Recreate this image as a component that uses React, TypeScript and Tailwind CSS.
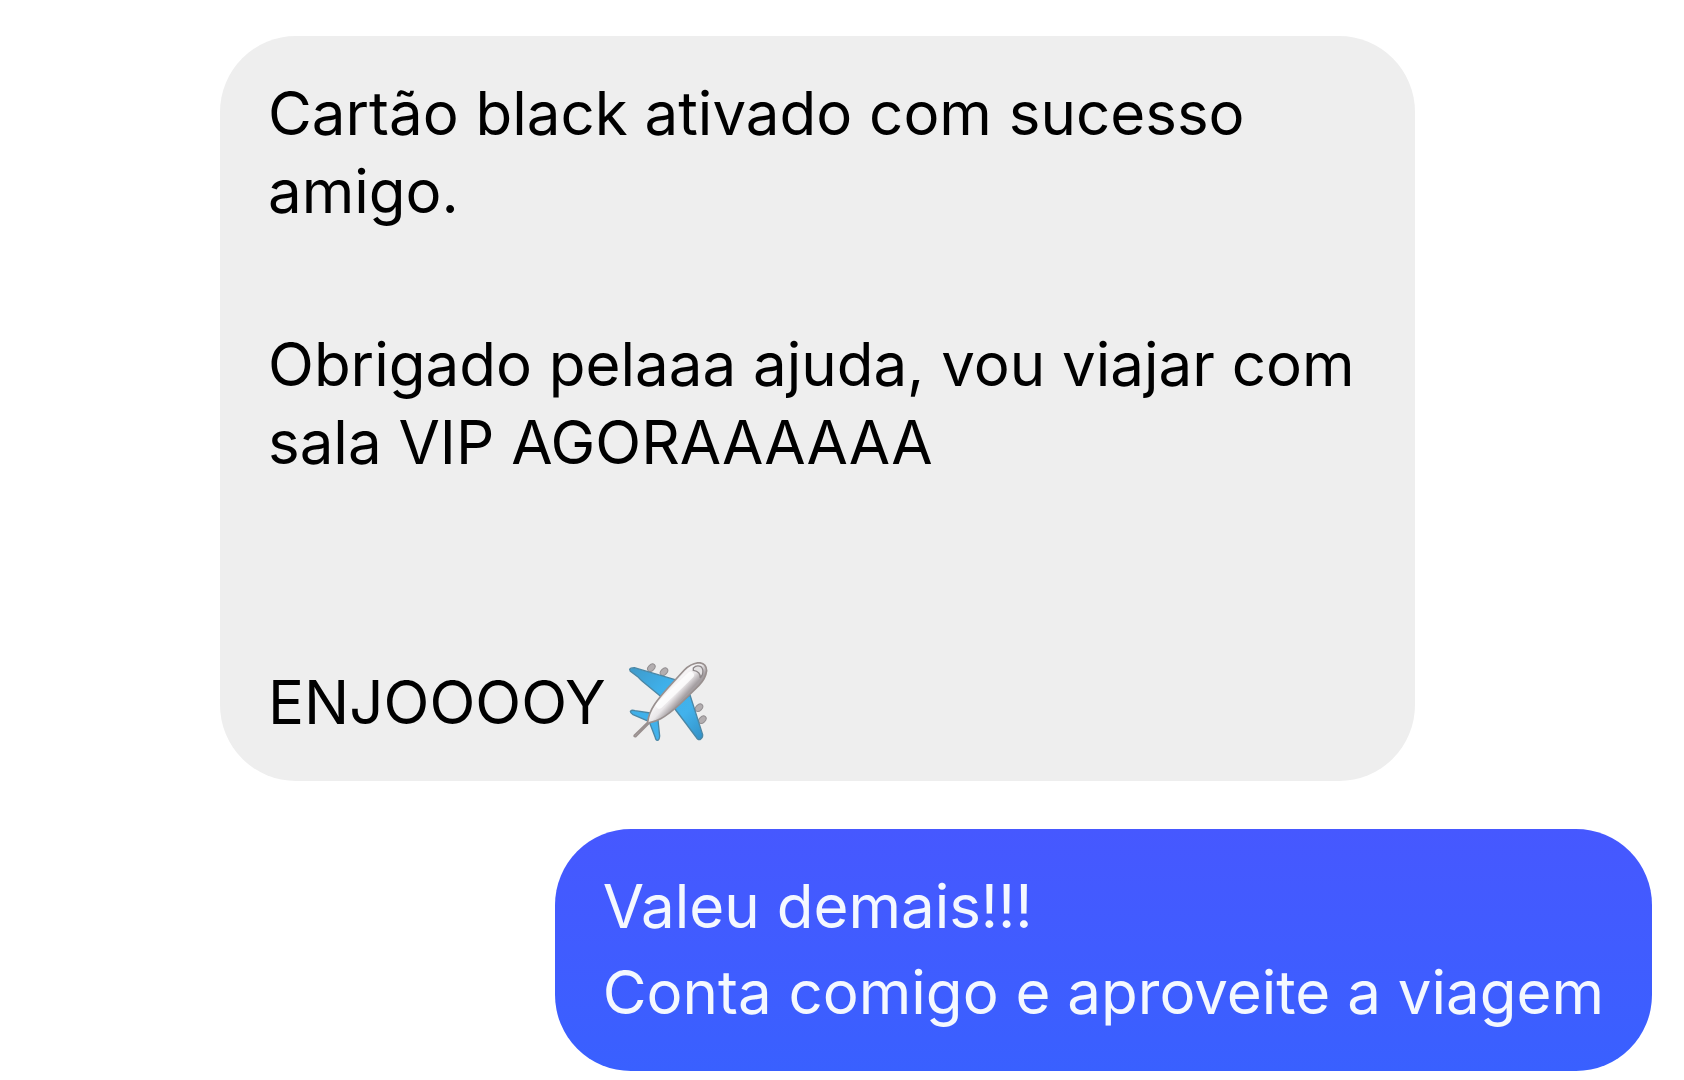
import type { ReactNode } from "react";

type MensagemProps = {
  enviada?: boolean;
  children: ReactNode;
};

function Mensagem({ enviada = false, children }: MensagemProps) {
  return (
    <li
      className={
        enviada
          ? "max-w-[1195px] self-end rounded-[76px] bg-linear-to-b from-[#4658ff] to-[#3960ff] px-12 pt-[38px] pb-10 text-[#f4f8ff]"
          : "max-w-[1195px] self-start rounded-[76px] bg-[#eeeeee] px-12 pt-[38px] pb-10 text-black"
      }
    >
      {children}
    </li>
  );
}

function Aviao() {
  return (
    <svg
      viewBox="57 44 240 240"
      className="size-20 shrink-0"
      role="img"
      aria-label="avião"
    >
      <defs>
        <linearGradient id="fuselagem" x1="165" y1="115" x2="215" y2="160" gradientUnits="userSpaceOnUse">
          <stop offset="0" stopColor="#b9b4b6" />
          <stop offset="0.3" stopColor="#f7f5f6" />
          <stop offset="0.65" stopColor="#e9e6e8" />
          <stop offset="1" stopColor="#a59fa2" />
        </linearGradient>
        <linearGradient id="asa" x1="70" y1="65" x2="275" y2="275" gradientUnits="userSpaceOnUse">
          <stop offset="0" stopColor="#3f9bcb" />
          <stop offset="0.35" stopColor="#3fb0ea" />
          <stop offset="0.7" stopColor="#42b2ec" />
          <stop offset="1" stopColor="#3392c8" />
        </linearGradient>
      </defs>

      {/* turbinas */}
      <g fill="#b3aeb0" stroke="#928e90" strokeWidth="3">
        <ellipse cx="127" cy="61" rx="13" ry="9" transform="rotate(-45 127 61)" />
        <ellipse cx="165" cy="73" rx="13" ry="9" transform="rotate(-45 165 73)" />
        <ellipse cx="270" cy="181" rx="13" ry="9" transform="rotate(-45 270 181)" />
        <ellipse cx="280" cy="217" rx="13" ry="9" transform="rotate(-45 280 217)" />
      </g>

      {/* asas */}
      <g fill="url(#asa)" stroke="#4b87a5" strokeWidth="4" strokeLinejoin="round">
        <path d="M62 66 Q64 61 76 61 L198 97 Q207 101 202 112 L163 147 Q158 151 151 144 L100 102 Q94 97 86 88 L64 72 Z" />
        <path d="M243 143 L281 262 Q282 272 273 277 Q265 278 261 269 L232 230 L200 188 Q196 181 202 175 Z" />
        <path d="M64 192 Q68 187 78 190 L124 197 L119 222 L72 202 Q64 198 64 192 Z" />
        <path d="M121 224 L146 209 L152 266 Q151 279 145 279 Q140 279 138 268 Z" />
      </g>

      {/* fuselagem */}
      <path
        d="M76 264 L116 225 Q119 198 137 171 Q150 151 182 116 L226 68 Q246 48 270 46 Q292 48 293 70 Q290 94 270 114 L213 170 Q180 201 155 214 Q140 222 122 226 L80 268 Q74 269 76 264 Z"
        fill="url(#fuselagem)"
        stroke="#99908f"
        strokeWidth="5"
        strokeLinejoin="round"
      />
      <path d="M151 174 L245 83" stroke="#ffffff" strokeOpacity="0.75" strokeWidth="20" strokeLinecap="round" />
      <path d="M253 62 Q263 52 276 58 Q285 66 280 82 L274 92 Q275 72 253 69 Z" fill="#e4e2e3" stroke="#8d8789" strokeWidth="4" />
    </svg>
  );
}

function App() {
  return (
    <main className="bg-white pt-9 pr-8 pl-[220px] font-['Inter',sans-serif] text-[60px] leading-[78px]">
      <ul className="flex flex-col gap-12">
        <Mensagem>
          <p>Cartão black ativado com sucesso amigo.</p>
          <p className="mt-[95px]">
            Obrigado pelaaa ajuda, vou viajar com sala VIP AGORAAAAAA
          </p>
          <p className="mt-[182px] flex h-[78px] items-center gap-[22px]">
            ENJOOOOY <Aviao />
          </p>
        </Mensagem>

        <Mensagem enviada>
          <p>Valeu demais!!!</p>
          <p className="mt-2">Conta comigo e aproveite a viagem</p>
        </Mensagem>
      </ul>
    </main>
  );
}

export default App;
